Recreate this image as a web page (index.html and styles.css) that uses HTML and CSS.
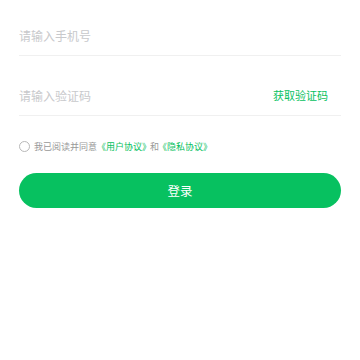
FILE: index.html
```html
<!DOCTYPE html>
<html lang="zh-CN">
<head>
    <meta charset="UTF-8">
    <meta name="viewport" content="width=device-width, initial-scale=1.0">
    <title>登录</title>
    <link rel="stylesheet" href="styles.css">
</head>
<body>
    <div class="login-form">
        <!-- 手机号 -->
        <div class="form-row">
            <input type="text" class="form-input" placeholder="请输入手机号">
        </div>

        <!-- 验证码 -->
        <div class="form-row">
            <input type="text" class="form-input" placeholder="请输入验证码">
            <span class="code-btn">获取验证码</span>
        </div>

        <!-- 协议 -->
        <div class="agreement">
            <span class="radio"></span>
            <span>我已阅读并同意</span>
            <a class="link">《用户协议》</a>
            <span class="and">和</span>
            <a class="link">《隐私协议》</a>
        </div>

        <button class="login-btn">登录</button>
    </div>
</body>
</html>
```

FILE: styles.css
```css
* {
    box-sizing: border-box;
}

body {
    margin: 0;
    background-color: #fff;
    font-family: "Noto Sans CJK SC", "Noto Sans", sans-serif;
    color: #333;
}

.login-form {
    padding: 15px 19px 0 19px;
}

/* 输入行 */
.form-row {
    display: flex;
    align-items: center;
    height: 41px;
    margin-bottom: 19px;
    border-bottom: 1px solid #f0f0f0;
}

.form-input {
    flex: 1;
    min-width: 0;
    border: none;
    outline: none;
    padding: 0;
    font-family: inherit;
    font-size: 12px;
    color: #333;
    background: transparent;
}

.form-input::placeholder {
    color: #c8c9cc;
}

.code-btn {
    font-size: 11px;
    color: #07c160;
    margin-right: 13px;
}

/* 协议 */
.agreement {
    display: flex;
    align-items: center;
    height: 14px;
    margin-top: 23px;
    font-size: 9px;
    color: #999;
}

.radio {
    width: 11px;
    height: 11px;
    border: 1px solid #b8b8b8;
    border-radius: 50%;
    margin-right: 4px;
}

.link {
    color: #07c160;
}

.and {
    margin: 0 -1px;
}

/* 登录按钮 */
.login-btn {
    display: block;
    width: 100%;
    height: 35px;
    margin-top: 20px;
    border: none;
    border-radius: 18px;
    background-color: #07c160;
    color: #fff;
    font-family: inherit;
    font-size: 12.5px;
}
```
